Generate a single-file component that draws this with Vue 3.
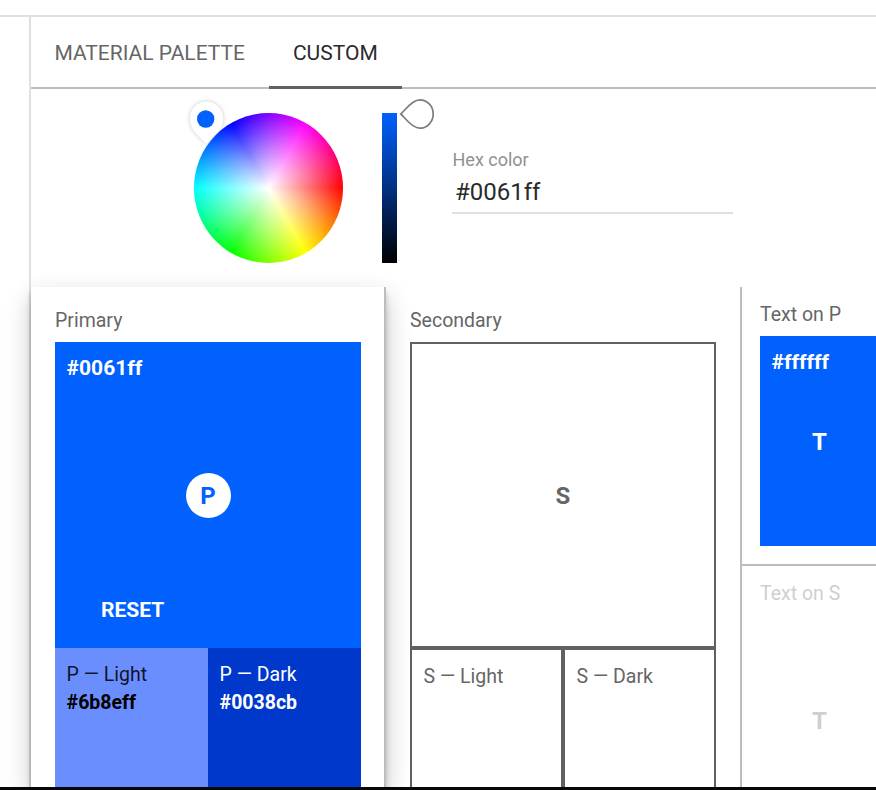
<script setup>
import { ref } from 'vue'

const tabs = ['MATERIAL PALETTE', 'CUSTOM']
const activeTab = ref('CUSTOM')
const hex = ref('#0061ff')
</script>

<template>
  <div class="page">
    <main class="tool">
      <nav class="tabs">
        <button
          v-for="tab in tabs"
          :key="tab"
          class="tab"
          :class="{ active: tab === activeTab }"
          @click="activeTab = tab"
        >{{ tab }}</button>
      </nav>

      <section class="picker">
        <div class="wheel">
          <svg class="wheel-pin" width="44" height="52" viewBox="0 0 44 52">
            <path d="M22.500 46C17 40 5.800 32.500 5.800 20.500A16.700 17 0 0 1 39.200 20.500C39.200 32.500 27 40 22.500 46Z" fill="#fff" />
            <circle cx="21.700" cy="21" r="8.700" fill="#0061ff" />
          </svg>
        </div>
        <div class="brightness">
          <svg class="brightness-pin" width="36" height="32" viewBox="0 0 36 32">
            <path d="M1.800 16C6 12.500 12.500 1.800 20.700 1.800A13.500 14.200 0 0 1 20.700 30.200C12.500 30.200 6 19.500 1.800 16Z" fill="#fff" stroke="#7d7d7d" stroke-width="1.700" />
          </svg>
        </div>
        <label class="hex">
          <span class="hex-label">Hex color</span>
          <span class="hex-value">{{ hex }}</span>
        </label>
      </section>

      <section class="panels">
        <article class="panel primary">
          <h2 class="title">Primary</h2>
          <div class="swatch filled">
            <strong class="code">#0061ff</strong>
            <span class="badge">P</span>
            <button class="reset">RESET</button>
          </div>
          <div class="variants">
            <div class="variant light"><span>P — Light</span><strong>#6b8eff</strong></div>
            <div class="variant dark"><span>P — Dark</span><strong>#0038cb</strong></div>
          </div>
        </article>

        <article class="panel secondary">
          <h2 class="title">Secondary</h2>
          <div class="swatch outlined"><span class="letter">S</span></div>
          <div class="variants">
            <div class="variant outlined"><span>S — Light</span></div>
            <div class="variant outlined"><span>S — Dark</span></div>
          </div>
        </article>

        <aside class="texts">
          <div class="text-block">
            <h2 class="title">Text on P</h2>
            <div class="text-swatch blue">
              <strong class="code">#ffffff</strong>
              <span class="letter">T</span>
            </div>
          </div>
          <div class="text-block muted">
            <h2 class="title">Text on S</h2>
            <div class="text-swatch"><span class="letter">T</span></div>
          </div>
        </aside>
      </section>
    </main>
  </div>
</template>

<style>
body {
  overflow: hidden;
}
</style>

<style scoped>
* {
  box-sizing: border-box;
}
.page {
  width: 876px;
  height: 790px;
  padding-top: 15px;
  overflow: hidden;
  background: #fff;
  border-bottom: 3px solid #060706;
  font-family: Roboto, sans-serif;
  font-size: 19.5px;
  line-height: 28px;
  color: #666;
}
.tool {
  height: 772px;
  border-top: 2px solid #e0e0e0;
  display: flex;
  flex-direction: column;
}
.tabs,
.picker,
.panels {
  margin-left: 29px;
  border-left: 2px solid #e0e0e0;
  flex: none;
}
.tabs {
  display: flex;
  height: 72px;
  background: linear-gradient(#bdbdbd, #bdbdbd) bottom / 100% 2px no-repeat;
}
button {
  border: 0;
  background: none;
  font: inherit;
  color: inherit;
}
.tab {
  padding: 2px 24px 0 23.400px;
  border-bottom: 3px solid transparent;
  font-size: 21px;
}
.tab.active {
  padding-left: 24px;
  color: #2a2a2a;
  border-bottom-color: #616161;
}
.picker {
  height: 198px;
  padding: 24px 0 0 163px;
  display: flex;
  align-items: flex-start;
}
.wheel {
  position: relative;
  z-index: 0;
  width: 150px;
  height: 150px;
}
.wheel::before {
  content: '';
  display: block;
  width: 149px;
  height: 149.5px;
  margin-left: 0.4px;
  border-radius: 50%;
  background:
    radial-gradient(closest-side, #fff, rgba(255, 255, 255, 0)),
    conic-gradient(from 90deg, #f00, #ff0, #0f0, #0ff, #00f, #f0f, #f00);
}
.wheel-pin {
  position: absolute;
  left: -10px;
  top: -15px;
  z-index: -1;
  filter: drop-shadow(0 0 2px rgba(0, 0, 0, 0.22));
}
.brightness {
  position: relative;
  width: 15px;
  height: 150px;
  margin-left: 38px;
  background: linear-gradient(#0061ff, #000);
}
.brightness-pin {
  position: absolute;
  left: 17px;
  top: -15px;
}
.hex {
  width: 281px;
  height: 78px;
  margin: 23px 0 0 55px;
  padding-top: 10px;
  display: flex;
  flex-direction: column;
  border-bottom: 2px solid #e0e0e0;
}
.hex-label {
  padding-left: 0.5px;
  font-size: 18px;
  color: #919191;
}
.hex-value {
  padding: 4px 0 0 3px;
  font-size: 24px;
  color: #2a2a2a;
}
.panels {
  display: flex;
  height: 500px;
}
.panel {
  width: 355px;
  padding: 19px 24px 0;
  border-right: 2px solid #bdbdbd;
  flex: none;
}
.primary {
  position: relative;
  background: #fff;
  box-shadow: 0 10px 24px rgba(0, 0, 0, 0.22), 0 6px 6px rgba(0, 0, 0, 0.2);
}
.secondary {
  width: 356px;
}
h2 {
  margin: 0;
  font: inherit;
}
.title {
  height: 36px;
  padding-top: 1px;
}
.swatch {
  position: relative;
  width: 306px;
  height: 306px;
  display: grid;
  place-items: center;
}
.filled {
  background: #0061ff;
  color: #fff;
}
.code {
  position: absolute;
  left: 11.600px;
  top: 12px;
  font-size: 21px;
}
.badge {
  width: 45px;
  height: 45px;
  padding-top: 1px;
  border-radius: 50%;
  background: #fff;
  color: #0061ff;
  display: grid;
  place-items: center;
  font-size: 24px;
  font-weight: 700;
}
.reset {
  position: absolute;
  left: 46px;
  bottom: 24px;
  padding: 0;
  font-size: 21px;
  font-weight: 700;
}
.letter {
  padding-top: 2px;
  font-size: 24px;
  font-weight: 700;
}
.outlined {
  border: 2px solid #616161;
}
.variants {
  display: flex;
  width: 306px;
}
.variant {
  width: 153px;
  height: 153px;
  padding: 13px 11.600px;
  display: flex;
  flex-direction: column;
}
.variant.outlined {
  flex: none;
}
.light {
  background: #6b8eff;
  color: #000;
}
.light span {
  color: rgba(0, 0, 0, 0.87);
}
.dark {
  background: #0038cb;
  color: #fff;
}
.texts {
  flex: none;
  width: 240px;
}
.text-block {
  height: 279px;
  padding: 13px 0 0 18px;
  border-bottom: 2px solid #bdbdbd;
}
.text-swatch {
  position: relative;
  width: 210px;
  height: 210px;
}
.text-swatch .letter {
  position: absolute;
  left: 52px;
  top: 90px;
}
.blue {
  background: #0061ff;
  color: #fff;
}
.muted {
  color: #cfcfcf;
}
</style>
